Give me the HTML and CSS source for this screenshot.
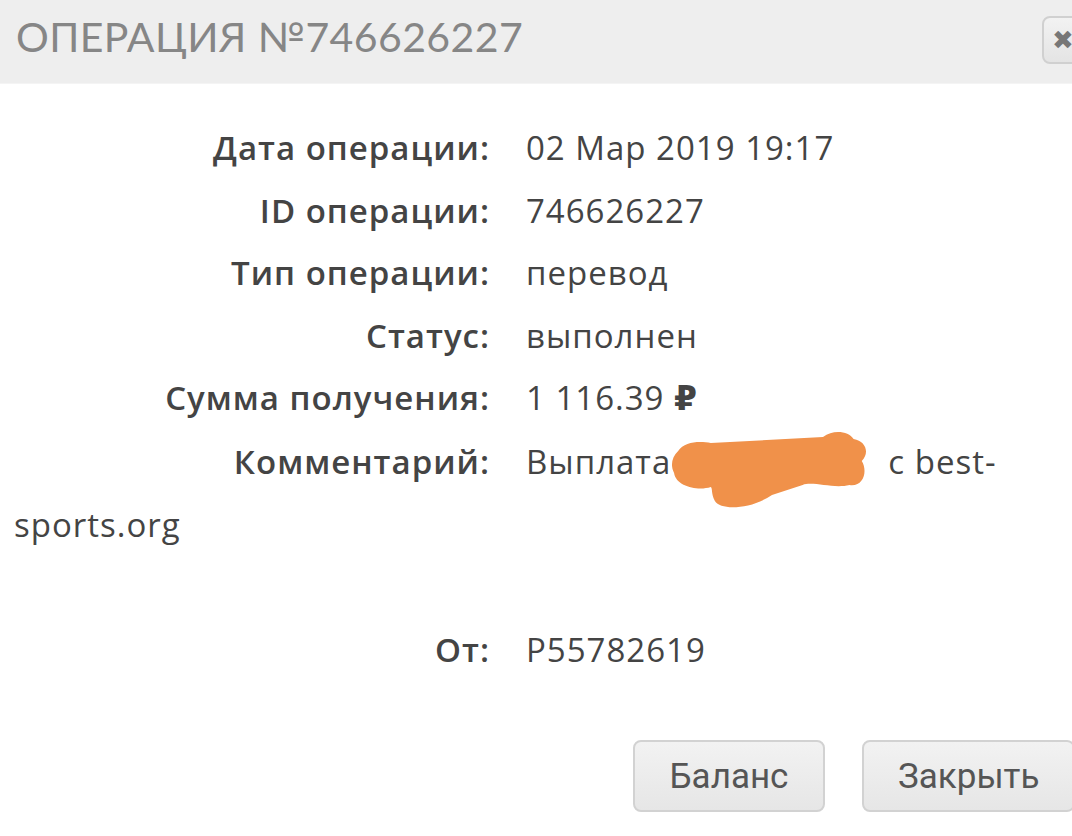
FILE: index.html
```html
<!DOCTYPE html>
<html>
<head>
    <meta charset="utf-8">
    <title>Операция №746626227</title>
    <link rel="stylesheet" href="styles.css">
</head>
<body>
    <div class="modal">
        <div class="modal-header">
            <span class="title">Операция №746626227</span>
            <button class="close">✖</button>
        </div>

        <div class="details">
            <div class="row"><span class="label">Дата операции:</span><span class="value">02 Мар 2019 19:17</span></div>
            <div class="row"><span class="label">ID операции:</span><span class="value">746626227</span></div>
            <div class="row"><span class="label">Тип операции:</span><span class="value">перевод</span></div>
            <div class="row"><span class="label">Статус:</span><span class="value">выполнен</span></div>
            <div class="row"><span class="label">Сумма получения:</span><span class="value">1 116.39 <b class="rub">₽</b></span></div>
            <div class="row"><span class="label">Комментарий:</span>Выплата <span class="hidden"></span> с best-sports.org</div>
            <div class="row empty"></div>
            <div class="row"><span class="label">От:</span><span class="value">P55782619</span></div>

            <!-- blot drawn over the comment -->
            <svg class="blot" width="204" height="84" viewBox="0 0 200 84" preserveAspectRatio="none">
                <path d="M 8 22 C 14 12, 30 12, 40 14 L 150 8 C 160 0, 175 2, 180 10 C 192 12, 196 24, 188 32 C 194 42, 190 58, 176 56 C 160 60, 140 52, 130 56 L 100 66 C 80 80, 50 82, 44 72 C 40 64, 42 60, 40 58 C 28 62, 6 58, 4 44 C 0 36, 2 28, 8 22 Z" fill="#f0914a"/>
            </svg>
        </div>

        <div class="buttons">
            <button class="btn">Баланс</button>
            <button class="btn">Закрыть</button>
        </div>
    </div>
</body>
</html>
```

FILE: styles.css
```css
html, body {
    margin: 0;
    padding: 0;
    background: white;
    overflow: hidden;
}

.modal {
    width: 1100px;
    font-family: 'Open Sans', sans-serif;
    color: #444;
}

.modal-header {
    position: relative;
    height: 84px;
    background: #eeeeee;
    border-bottom: 1px solid #f4f4f4;
    box-sizing: border-box;
    padding-left: 16px;
    display: flex;
    align-items: center;
}

.title {
    font-family: Lato, sans-serif;
    font-size: 41px;
    text-transform: uppercase;
    letter-spacing: 0.4px;
    color: #868686;
    margin-top: -10px;
}

.close {
    position: absolute;
    left: 1042px;
    top: 16px;
    width: 50px;
    height: 48px;
    border: 2px solid #d0d0d0;
    border-radius: 8px;
    background: linear-gradient(#f2f2f2, #e4e4e4);
    color: #777;
    font-size: 26px;
    padding: 0 0 0 8px;
    text-align: left;
}

.details {
    position: relative;
    padding: 33px 0 0 14px;
    font-size: 33px;
    letter-spacing: 1px;
    color: #444;
}

.row {
    line-height: 62.6px;
}

.row.empty {
    height: 62.6px;
}

.label {
    display: inline-block;
    width: 476px;
    margin-right: 36px;
    text-align: right;
    font-weight: 600;
    color: #444;
}

.value {
    color: #444;
}

/* room for the blotted-out part of the comment */
.hidden {
    display: inline-block;
    width: 198px;
}

.rub {
    font-family: 'DejaVu Sans', sans-serif;
    font-weight: bold;
}

.blot {
    position: absolute;
    left: 670px;
    top: 345px;
}

.buttons {
    display: flex;
    gap: 37px;
    margin-top: 59px;
    padding-left: 633px;
}

.btn {
    height: 72px;
    padding: 0 34px;
    min-width: 192px;
    border: 2px solid #d2d2d2;
    border-radius: 8px;
    background: linear-gradient(#f2f2f2, #e6e6e6);
    font-family: Roboto, sans-serif;
    font-size: 35px;
    color: #555;
}
```
